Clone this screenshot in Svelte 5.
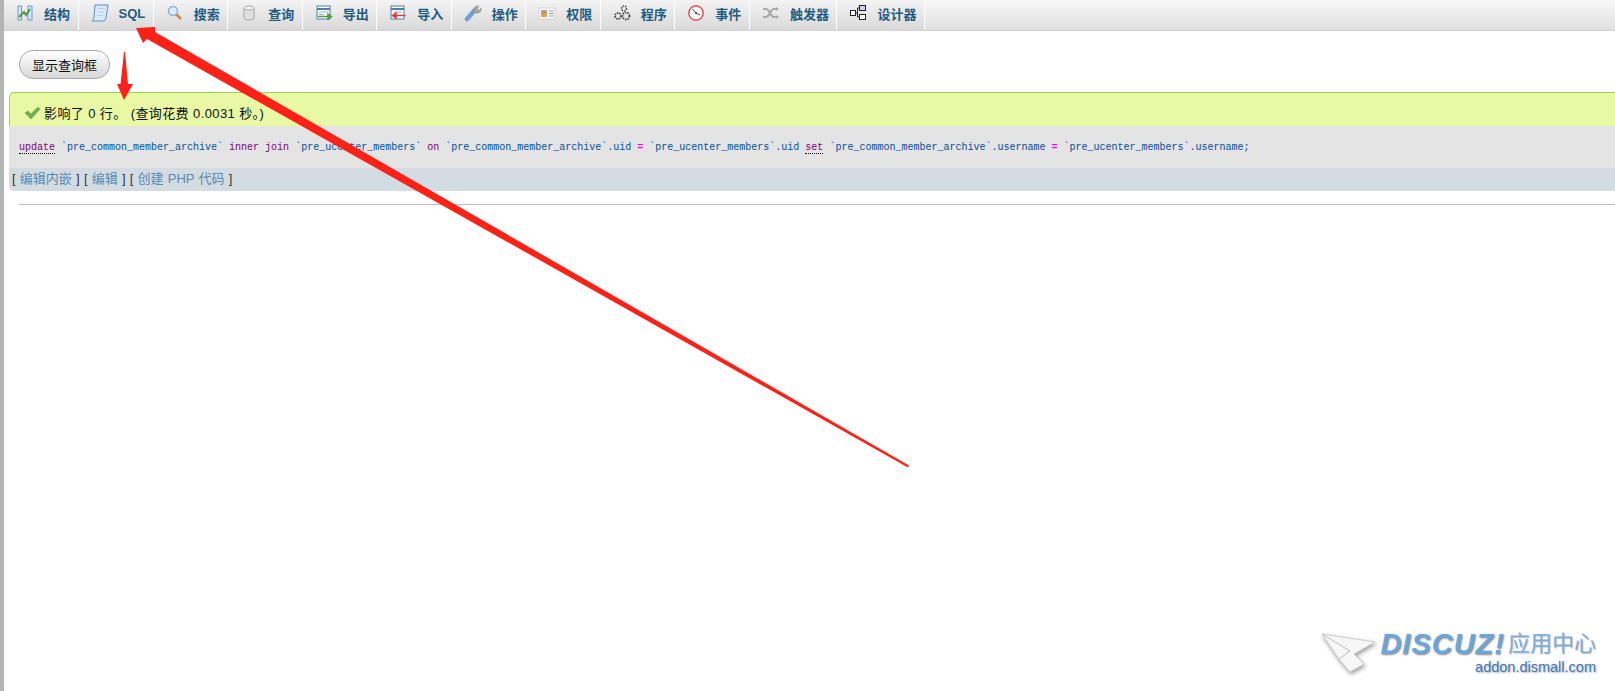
<script>
  const tabs = [
    { name: "结构", icon: "table" },
    { name: "SQL", icon: "sql" },
    { name: "搜索", icon: "search" },
    { name: "查询", icon: "db" },
    { name: "导出", icon: "export" },
    { name: "导入", icon: "import" },
    { name: "操作", icon: "wrench" },
    { name: "权限", icon: "card" },
    { name: "程序", icon: "gears" },
    { name: "事件", icon: "clock" },
    { name: "触发器", icon: "shuffle" },
    { name: "设计器", icon: "design" },
  ];

  const sql = [
    ["kw", "update", true], ["", " "], ["str", "`pre_common_member_archive`"], ["", " "],
    ["kw", "inner"], ["", " "], ["kw", "join"], ["", " "], ["str", "`pre_ucenter_members`"], ["", " "],
    ["kw", "on"], ["", " "], ["str", "`pre_common_member_archive`.uid"], ["", " "], ["op", "="], ["", " "],
    ["str", "`pre_ucenter_members`.uid"], ["", " "], ["kw", "set", true], ["", " "],
    ["str", "`pre_common_member_archive`.username"], ["", " "], ["op", "="], ["", " "],
    ["str", "`pre_ucenter_members`.username;"],
  ];
</script>

<div class="page">
  <nav class="tabs">
    {#each tabs as tab}
      <a class="tab" href="#top">
        <svg class="icon" width="18" height="18" viewBox="0 0 18 18" fill="none">
          {#if tab.icon === "table"}
            <rect x="2" y="2" width="3.500" height="14" fill="#d7e6f5" stroke="#6e9ccb"/>
            <rect x="12" y="2" width="4" height="14" fill="#d7e6f5" stroke="#6e9ccb"/>
            <path d="M3 13 L8 8 L10 11 L14 5" stroke="#4f9a3c" stroke-width="2"/>
          {:else if tab.icon === "sql"}
            <path d="M4 1 H17 L15 14 Q14.500 17 12 17 H1 Q3 16 3 13 Z" fill="#dbe9f8" stroke="#5d8fca"/>
            <path d="M7 4.500 H14 M6.500 8 H13 M6 11.500 H12" stroke="#b4cfea"/>
          {:else if tab.icon === "search"}
            <circle cx="7" cy="7" r="4.500" fill="#dcebf9" stroke="#8fb1d3" stroke-width="1.500"/>
            <path d="M10.500 10.500 L15 15" stroke="#c98f4a" stroke-width="2.500"/>
          {:else if tab.icon === "db"}
            <path d="M4 4 V14 Q4 16 9 16 Q14 16 14 14 V4 Z" fill="#e0e0e0" stroke="#a8a8a8"/>
            <ellipse cx="9" cy="4" rx="5" ry="2" fill="#f6f6f6" stroke="#a8a8a8"/>
          {:else if tab.icon === "export"}
            <rect x="2" y="2" width="13" height="13" fill="#fff" stroke="#4f7fa8"/>
            <path d="M2 5 H15" stroke="#4f7fa8" stroke-width="2"/>
            <path d="M4 8 H13 M4 10.500 H9" stroke="#9bb8d0"/>
            <path d="M3 12.500 H13 M13 10 L16.500 12.500 L13 15 Z" stroke="#4f9a3c" fill="#6bb04f" stroke-width="1.500"/>
          {:else if tab.icon === "import"}
            <rect x="2" y="2" width="13" height="13" fill="#fff" stroke="#4f7fa8"/>
            <path d="M2 5 H15" stroke="#4f7fa8" stroke-width="2"/>
            <path d="M4 8 H13" stroke="#9bb8d0"/>
            <path d="M7 11.500 H16.500 M7 9 L3.500 11.500 L7 14 Z" stroke="#e0393a" fill="#e0393a" stroke-width="1.500"/>
          {:else if tab.icon === "wrench"}
            <path d="M3 15 L11 6" stroke="#6f9fdc" stroke-width="4.500" stroke-linecap="round"/>
            <path d="M10 7 A4 4 0 0 1 15 2 L13 5 L15.500 6.500 L17 4 A4 4 0 0 1 12 9 Z" fill="#a9a9a0" stroke="#85857c" stroke-width=".5"/>
          {:else if tab.icon === "card"}
            <rect x="1" y="4" width="16" height="11" fill="#fbfbfb" stroke="#d4d4d4"/>
            <rect x="3" y="6" width="6" height="7" fill="#e8a048"/>
            <rect x="4.500" y="6.500" width="3" height="3" fill="#6f9fdc"/>
            <path d="M11 7 H15.500 M11 9.500 H15.500 M11 12 H15.500" stroke="#8a9aa8"/>
          {:else if tab.icon === "gears"}
            <circle cx="11" cy="4.500" r="2.500" stroke="#444" stroke-width="1.500" stroke-dasharray="1.500 1"/>
            <circle cx="5" cy="12" r="3" stroke="#444" stroke-width="1.800" stroke-dasharray="1.500 1"/>
            <circle cx="13" cy="12" r="3.500" stroke="#444" stroke-width="1.800" stroke-dasharray="1.500 1"/>
          {:else if tab.icon === "clock"}
            <circle cx="9" cy="9" r="7.200" fill="#f7f7f7" stroke="#e0393a" stroke-width="1.300"/>
            <path d="M5.500 5 L9 9 L13 11" stroke="#555" stroke-width="1"/>
            <circle cx="9" cy="9" r="1" fill="#333"/>
          {:else if tab.icon === "shuffle"}
            <path d="M1 5 H4 C8 5 8 13 12 13 H15 M1 13 H4 C8 13 8 5 12 5 H15" stroke="#a9a9a9" stroke-width="2"/>
            <path d="M14 3 L17 5 L14 7 Z M14 11 L17 13 L14 15 Z" fill="#a9a9a9"/>
          {:else}
            <rect x="1.500" y="6.500" width="5" height="5" fill="#fff" stroke="#222"/>
            <rect x="10.500" y="1.500" width="6" height="5" fill="#d5cdf0" stroke="#222"/>
            <rect x="10.500" y="10.500" width="6" height="5" fill="#fff" stroke="#222"/>
            <path d="M6.500 9 H8.500 V4 H10.500 M8.500 9 V13 H10.500" stroke="#222"/>
          {/if}
        </svg>
        <span class="label">{tab.name}</span>
      </a>
    {/each}
  </nav>

  <div class="content">
    <button class="toggle">显示查询框</button>

    <div class="result">
      <div class="success">
        <svg width="17" height="14" viewBox="0 0 17 14"><path d="M1 7 L4 5 L7 8 L14 1 L16 3 L7 13 Z" fill="#6fb04f" stroke="#5a9a3a" stroke-width=".5"/></svg>
        <span>影响了 0 行。 (查询花费 0.0031 秒。)</span>
      </div>
      <div class="sql">
        {#each sql as [cls, text, doc]}<span class={cls} class:doc>{text}</span>{/each}
      </div>
      <div class="links">
        [ <a href="#top">编辑内嵌</a> ] [ <a href="#top">编辑</a> ] [ <a href="#top">创建 PHP 代码</a> ]
      </div>
    </div>

    <hr />
  </div>

  <!-- annotation arrows drawn on top of the screenshot -->
  <svg class="arrows" width="1615" height="691" viewBox="0 0 1615 691">
    <polygon points="909,465.500 908,467.500 147,39 143,43 136,28 155,27 155,32" fill="#fe2117"/>
    <polygon points="124,52 125,52 128,84 133,84 124,100 117,84 120.500,84" fill="#fe2117"/>
  </svg>

  <div class="watermark">
    <svg class="plane" width="56" height="42" viewBox="0 0 56 42">
      <polygon points="2,2 55,10 34,22 44,32 30,40 19,27" fill="#f7f7f7" stroke="#d0d0d0" stroke-width="1"/>
      <path d="M2 2 L30 19 L19 27" fill="none" stroke="#bbb"/>
    </svg>
    <div class="mark-text">
      <div class="mark-top"><span class="brand">DISCUZ!</span><span class="cn">应用中心</span></div>
      <div class="site">addon.dismall.com</div>
    </div>
  </div>
</div>

<style>
  :global(body) {
    margin: 0;
    background: #fff;
  }
  .page {
    position: relative;
    height: 691px;
    overflow: hidden;
    border-left: 4px solid #b4b4b4;
    font-family: "Liberation Sans", "Noto Sans CJK SC", sans-serif;
    box-sizing: border-box;
  }
  .tabs {
    display: flex;
    height: 31px;
    box-sizing: border-box;
    background: linear-gradient(#f8f8f8, #e0e0e0);
    border-bottom: 1px solid #d2d2d2;
  }
  .tab {
    display: flex;
    align-items: center;
    gap: 10px;
    padding: 0 7.500px 4px 12px;
    border-right: 1px solid #fff;
    background: linear-gradient(#f4f4f4, #d9d9d9);
    text-decoration: none;
    color: #235a81;
    font-size: 13px;
    font-weight: 700;
  }
  .icon {
    flex: none;
  }
  .label {
    min-width: 26px;
    white-space: nowrap;
  }
  .content {
    padding: 19px 0 0 5px;
    width: 1700px;
  }
  .toggle {
    display: block;
    margin-left: 10px;
    width: 91px;
    height: 29px;
    padding: 0;
    border: 1px solid #aaa;
    border-radius: 14px;
    background: linear-gradient(#fff, #d8d8d8);
    color: #111;
    font-family: inherit;
    font-size: 13px;
  }
  .result {
    margin-top: 13px;
  }
  .success {
    display: flex;
    align-items: center;
    gap: 3px;
    height: 33px;
    padding: 0 0 0 14px;
    border: 1px solid #a4d04e;
    border-bottom: 0;
    border-radius: 5px 0 0 0;
    background: #e8f8a4;
    color: #111;
    font-size: 13px;
    letter-spacing: .4px;
  }
  .success span {
    padding-top: 6px;
  }
  .success svg {
    margin-top: 6px;
  }
  .sql {
    height: 40px;
    line-height: 40px;
    padding: 2px 0 0 10px;
    background: #e4e4e4;
    color: #0050a0;
    font-family: "Liberation Mono", monospace;
    font-size: 10px;
    white-space: pre;
  }
  .kw {
    color: #800080;
  }
  .doc {
    border-bottom: 1px dotted #000;
  }
  .op {
    color: #ff00ff;
    font-weight: 700;
  }
  .str {
    color: #0050a0;
  }
  .links {
    height: 23px;
    line-height: 21px;
    padding-left: 3px;
    background: #d3dce3;
    border-radius: 0 0 0 5px;
    font-size: 13px;
    color: #333;
    word-spacing: .6px;
  }
  .links a {
    color: #5a8ab0;
    text-decoration: none;
  }
  hr {
    margin: 13px 0 0 10px;
    border: 0;
    border-top: 1px solid #bdbdbd;
  }
  .arrows {
    position: absolute;
    left: -4px;
    top: 0;
    pointer-events: none;
  }
  .watermark {
    position: absolute;
    right: 19px;
    bottom: 15px;
    display: flex;
    align-items: flex-start;
    gap: 4px;
  }
  .plane {
    margin-top: 3px;
    filter: drop-shadow(1px 2px 2px #999);
  }
  .mark-text {
    text-align: right;
  }
  .mark-top {
    display: flex;
    align-items: center;
    gap: 3px;
  }
  .brand {
    font-family: "Liberation Sans", sans-serif;
    font-size: 29px;
    font-style: italic;
    font-weight: 700;
    letter-spacing: 1px;
    line-height: 30px;
    color: #6aa6dc;
    text-shadow: 1px 1px 2px #8a8a8a;
  }
  .cn {
    font-size: 22px;
    line-height: 30px;
    color: #7ab0e4;
    text-shadow: 1px 1px 1px #bbb;
  }
  .site {
    font-family: "Liberation Sans", sans-serif;
    font-size: 14.500px;
    line-height: 17px;
    color: #3f79b8;
    text-shadow: 1px 1px 2px #aaa;
  }
</style>
